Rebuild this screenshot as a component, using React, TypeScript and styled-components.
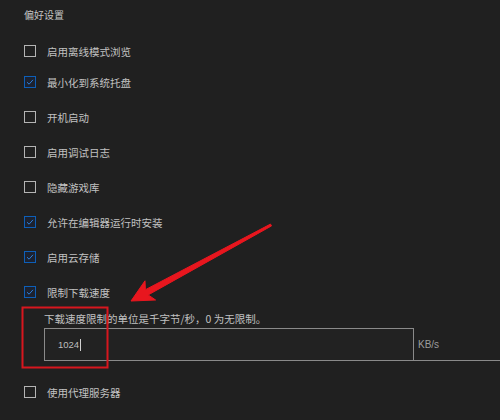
import React, { useState } from 'react';
import styled, { createGlobalStyle } from 'styled-components';

const GlobalStyle = createGlobalStyle`
  html, body {
    margin: 0;
    padding: 0;
    background: #202020;
  }
  body {
    font-family: "Noto Sans CJK SC", "Noto Sans", sans-serif;
    color: #c9c9c9;
  }
`;

const Page = styled.div`
  position: relative;
  width: 500px;
  height: 420px;
  overflow: hidden;
  background: #202020;
`;

const Content = styled.div`
  display: flex;
  flex-direction: column;
  padding: 6px 0 0 24px;
`;

const Title = styled.div`
  font-size: 10px;
  line-height: 18px;
  color: #c4c4c4;
  margin-bottom: 13.5px;
`;

const Row = styled.label<{ $first?: boolean }>`
  display: flex;
  align-items: center;
  gap: 11px;
  height: ${(p) => (p.$first ? '27px' : '35px')};
  font-size: 10.5px;
  color: #c2c2c2;
  cursor: pointer;
`;

const Box = styled.span<{ $checked: boolean }>`
  box-sizing: border-box;
  width: 12px;
  height: 12px;
  flex: none;
  display: flex;
  align-items: center;
  justify-content: center;
  border: 1.5px solid ${(p) => (p.$checked ? '#0d5fb8' : '#b4b4b4')};
  background: ${(p) => (p.$checked ? '#1c2230' : 'transparent')};
`;

const LimitBlock = styled.div`
  display: flex;
  flex-direction: column;
  padding: 2.5px 0 0 20px;
  margin-bottom: 13.5px;
`;

const Hint = styled.div`
  font-size: 10.5px;
  line-height: 14px;
  color: #c0c0c0;
  margin-bottom: 2px;
`;

const InputRow = styled.div`
  display: flex;
  align-items: stretch;
  border-bottom: 1px solid #8a8a8a;
  height: 32px;
`;

const SpeedInput = styled.div`
  box-sizing: border-box;
  width: 370px;
  border: 1px solid #8a8a8a;
  border-bottom: none;
  background: #222222;
  display: flex;
  align-items: center;
  padding-left: 13px;
  font-family: "Liberation Sans", sans-serif;
  font-size: 9.5px;
  color: #bdbdbd;
`;

const Caret = styled.span`
  display: inline-block;
  width: 1px;
  height: 12px;
  background: #d0d0d0;
  margin-left: 1px;
`;

const Unit = styled.span`
  display: flex;
  align-items: center;
  padding-left: 4px;
  font-family: "Liberation Sans", sans-serif;
  font-size: 10px;
  color: #9c9c9c;
`;

const Overlay = styled.svg`
  position: absolute;
  left: 0;
  top: 0;
  pointer-events: none;
`;

const Check = () => (
  <svg width="8" height="8" viewBox="0 0 8 8">
    <path d="M1 4.2 L3.1 6.2 L7 1.8" fill="none" stroke="#2f7fd6" strokeWidth="1" />
  </svg>
);

type Option = { key: string; label: string; checked: boolean };

const initialOptions: Option[] = [
  { key: 'offline', label: '启用离线模式浏览', checked: false },
  { key: 'tray', label: '最小化到系统托盘', checked: true },
  { key: 'startup', label: '开机启动', checked: false },
  { key: 'debug', label: '启用调试日志', checked: false },
  { key: 'hide', label: '隐藏游戏库', checked: false },
  { key: 'editor', label: '允许在编辑器运行时安装', checked: true },
  { key: 'cloud', label: '启用云存储', checked: true },
  { key: 'limit', label: '限制下载速度', checked: true },
];

export default function App() {
  const [options, setOptions] = useState<Option[]>(initialOptions);
  const [proxy, setProxy] = useState<boolean>(false);

  // 체크박스 토글
  const handleToggle = (key: string) => {
    setOptions((prev) => prev.map((o) => (o.key === key ? { ...o, checked: !o.checked } : o)));
  };

  return (
    <>
      <GlobalStyle />
      <Page>
        <Content>
          <Title>偏好设置</Title>
          {options.map((o, i) => (
            <Row key={o.key} $first={i === 0} onClick={() => handleToggle(o.key)}>
              <Box $checked={o.checked}>{o.checked && <Check />}</Box>
              <span>{o.label}</span>
            </Row>
          ))}
          <LimitBlock>
            <Hint>下载速度限制的单位是千字节/秒，0 为无限制。</Hint>
            <InputRow>
              <SpeedInput>
                1024
                <Caret />
              </SpeedInput>
              <Unit>KB/s</Unit>
            </InputRow>
          </LimitBlock>
          <Row onClick={() => setProxy((p) => !p)}>
            <Box $checked={proxy}>{proxy && <Check />}</Box>
            <span>使用代理服务器</span>
          </Row>
        </Content>
        {/* 빨간 표시 */}
        <Overlay width="500" height="420" viewBox="0 0 500 420">
          <rect x="22.5" y="307.5" width="85" height="60" fill="none" stroke="#d7161e" strokeWidth="2" />
          <polygon
            points="271.5,225.9 148.2,294.9 155.6,300 131,301 145,280.8 145.4,289.7 270.5,224.1"
            fill="#e8161e"
            stroke="#e8161e"
            strokeWidth="1"
            strokeLinejoin="round"
          />
        </Overlay>
      </Page>
    </>
  );
}
